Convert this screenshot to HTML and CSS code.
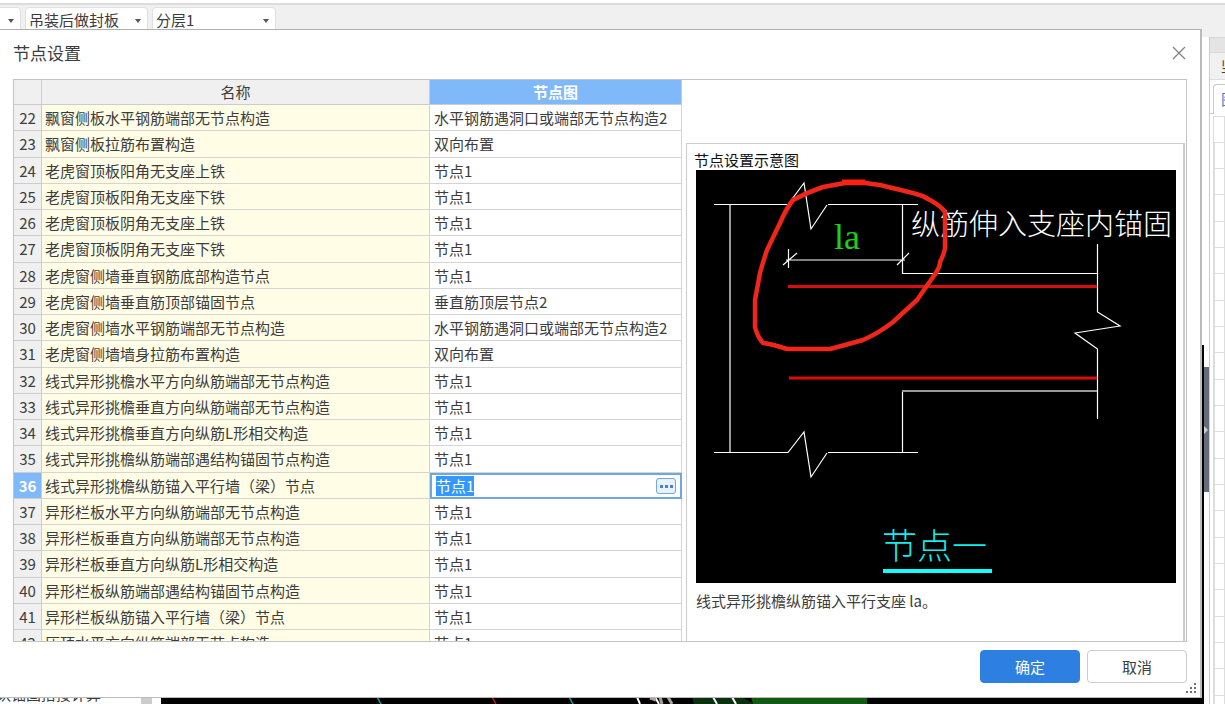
FILE: index.html
```html
<!DOCTYPE html>
<html lang="zh-CN">
<head>
<meta charset="utf-8">
<title>节点设置</title>
<link rel="stylesheet" href="styles.css">
</head>
<body>
<div class="app">
  <div class="toolbar">
    <span class="combo combo-first"><select aria-label="构件"><option></option></select></span>
    <span class="combo combo-type"><select aria-label="封板类型"><option>吊装后做封板</option></select></span>
    <span class="combo combo-layer"><select aria-label="分层"><option>分层1</option></select></span>
  </div>
  <div class="workspace">
    <div class="tree"><div class="tree-label">默认锚固搭接计算</div><div class="tree-scroll"></div></div>
    <div class="canvas">
      <svg class="streaks" width="760" height="7" viewBox="161 697 760 7" aria-hidden="true">
        <path d="M692 697h50l12 7h-60z" fill="#0a3010"/>
        <path d="M751 697h116v7h-114z" fill="#125a14"/>
        <g fill="none" stroke-width="1.5">
          <path d="M377 697l4 7M569 697l4 7" stroke="#159aa0"/>
          <path d="M492 697l4 7" stroke="#c01818"/>
          <path d="M637 697l3 7M655 697l4 7M713 697l4 7M732 697l4 7" stroke="#fff" stroke-width="2"/>
          <path d="M650 698l6 2M660 697l2 7M668 697l4 7" stroke="#b09c9c" stroke-width="3"/>
        </g>
      </svg>
    </div>
    <div class="splitter"><div class="handle"></div></div>
    <div class="side">
      <div class="side-title"></div>
      <div class="side-tools">竖</div>
      <div class="side-tabs"><div class="side-tab">图</div></div>
      <div class="side-head"></div>
      <div class="side-grid"></div>
    </div>
  </div>
</div>

<section class="dialog" role="dialog" aria-labelledby="dlg-title">
  <header class="dialog-head">
    <h1 id="dlg-title">节点设置</h1>
    <button class="close" aria-label="关闭"><svg width="14" height="14" viewBox="0 0 14 14"><path d="M1 1l12 12M13 1L1 13" stroke="#858585" stroke-width="1.4" fill="none"/></svg></button>
  </header>
  <div class="content">
    <div class="table-wrap">
      <table class="nodes">
        <colgroup><col class="c-num"><col><col class="c-node"></colgroup>
        <thead><tr><th></th><th>名称</th><th class="active">节点图</th></tr></thead>
        <tbody>
          <tr><th>22</th><td>飘窗侧板水平钢筋端部无节点构造</td><td>水平钢筋遇洞口或端部无节点构造2</td></tr>
          <tr><th>23</th><td>飘窗侧板拉筋布置构造</td><td>双向布置</td></tr>
          <tr><th>24</th><td>老虎窗顶板阳角无支座上铁</td><td>节点1</td></tr>
          <tr><th>25</th><td>老虎窗顶板阳角无支座下铁</td><td>节点1</td></tr>
          <tr><th>26</th><td>老虎窗顶板阴角无支座上铁</td><td>节点1</td></tr>
          <tr><th>27</th><td>老虎窗顶板阴角无支座下铁</td><td>节点1</td></tr>
          <tr><th>28</th><td>老虎窗侧墙垂直钢筋底部构造节点</td><td>节点1</td></tr>
          <tr><th>29</th><td>老虎窗侧墙垂直筋顶部锚固节点</td><td>垂直筋顶层节点2</td></tr>
          <tr><th>30</th><td>老虎窗侧墙水平钢筋端部无节点构造</td><td>水平钢筋遇洞口或端部无节点构造2</td></tr>
          <tr><th>31</th><td>老虎窗侧墙墙身拉筋布置构造</td><td>双向布置</td></tr>
          <tr><th>32</th><td>线式异形挑檐水平方向纵筋端部无节点构造</td><td>节点1</td></tr>
          <tr><th>33</th><td>线式异形挑檐垂直方向纵筋端部无节点构造</td><td>节点1</td></tr>
          <tr><th>34</th><td>线式异形挑檐垂直方向纵筋L形相交构造</td><td>节点1</td></tr>
          <tr><th>35</th><td>线式异形挑檐纵筋端部遇结构锚固节点构造</td><td>节点1</td></tr>
          <tr class="current"><th>36</th><td>线式异形挑檐纵筋锚入平行墙（梁）节点</td><td class="editing"><div class="editor"><span class="field"><span class="picked">节点1</span></span><button class="more" aria-label="选择节点图"><i></i><i></i><i></i></button></div></td></tr>
          <tr><th>37</th><td>异形栏板水平方向纵筋端部无节点构造</td><td>节点1</td></tr>
          <tr><th>38</th><td>异形栏板垂直方向纵筋端部无节点构造</td><td>节点1</td></tr>
          <tr><th>39</th><td>异形栏板垂直方向纵筋L形相交构造</td><td>节点1</td></tr>
          <tr><th>40</th><td>异形栏板纵筋端部遇结构锚固节点构造</td><td>节点1</td></tr>
          <tr><th>41</th><td>异形栏板纵筋锚入平行墙（梁）节点</td><td>节点1</td></tr>
          <tr><th>42</th><td>压顶水平方向纵筋端部无节点构造</td><td>节点1</td></tr>
        </tbody>
      </table>
    </div>
    <div class="preview-col">
      <div class="preview">
        <h2>节点设置示意图</h2>
        <svg class="drawing" width="480" height="413" viewBox="696 170 480 413" role="img" aria-label="节点一">
          <rect x="696" y="170" width="480" height="413" fill="#000"/>
          <g fill="none" stroke="#fff" stroke-width="1.2">
            <path d="M714 204.500H788L804 183L811 229L827 205M828 204.500H918"/>
            <path d="M714 452.500H788L804 432L811 477L827 453M828 452.500H918"/>
            <path d="M902.500 205V273.500H1097M902.500 452V391"/>
            <path d="M1097.500 244V312L1120 326L1075 333L1097.500 349V419"/>
            <path d="M786 260H905M788.500 249V268M783 265L797 253M897 265L909 253"/>
          </g>
          <path d="M730 205V452M902 391H1097" fill="none" stroke="#999" stroke-width="2"/>
          <path d="M788 286.500H1097M789 378H1097" stroke="#d80f0f" stroke-width="3"/>
          <text class="t-la" x="834" y="249">la</text>
          <text class="t-note" x="911" y="235">纵筋伸入支座内锚固</text>
          <text class="t-name" x="882" y="559">节点一</text>
          <path d="M883 571H992" stroke="#1ff" stroke-width="4"/>
          <path d="M865 183L845 183L823 187Q808 192 793 200Q786 209 780 223L767 250Q763 262 760 273L755 300V327Q757 336 763 343Q772 344 787 349H830L845 345L863 340Q879 333 893 322L917 300L933 277Q940 268 940 262Q945 252 945 247V212Q941 206 930 200Q922 195 913 193L880 185Z" fill="none" stroke="#f0261a" stroke-width="4.500" stroke-linejoin="round"/>
          <path d="M842 182H865" stroke="#ff2010" stroke-width="5"/>
        </svg>
        <p>线式异形挑檐纵筋锚入平行支座 la。</p>
      </div>
    </div>
  </div>
  <footer class="actions">
    <button class="btn primary">确定</button>
    <button class="btn">取消</button>
  </footer>
  <svg class="grip" width="10" height="10" viewBox="0 0 10 10" aria-hidden="true"><path d="M8 0h2v2h-2zM8 4h2v2h-2zM8 8h2v2h-2zM4 4h2v2h-2zM4 8h2v2h-2zM0 8h2v2h-2z" fill="#6d6d78"/></svg>
</section>
</body>
</html>
```
FILE: styles.css
```css
* { box-sizing: border-box; }
body {
  margin: 0;
  height: 100vh;
  overflow: hidden;
  position: relative;
  font: 15px/20px "Noto Sans CJK SC", sans-serif;
  color: #3c3c3c;
  background: #fff;
}
h1, h2, p { margin: 0; font-weight: 400; }
button { font: inherit; color: inherit; padding: 0; }

/* main window behind the dialog */
.app { height: 100%; display: flex; flex-direction: column; }
.toolbar {
  display: flex;
  gap: 4px;
  height: 34px;
  margin-top: 3px;
  padding-top: 2px;
  border-top: 2px solid #dcdcdc;
  background: #f0f0f0;
}
.combo { position: relative; height: 26px; }
.combo-first { width: 21px; }
.combo-type { width: 123px; }
.combo-layer { width: 124px; }
.combo select {
  appearance: none;
  width: 100%;
  height: 100%;
  padding: 0 3px;
  border: 1px solid #e0e0e0;
  border-radius: 4px;
  background: #fff;
  font: inherit;
  color: #3c3c3c;
}
.combo-first select { border-left: 0; border-radius: 0 4px 4px 0; }
.combo::after {
  content: "";
  position: absolute;
  right: 7px;
  top: 12px;
  border: 3px solid transparent;
  border-top: 4px solid #555;
  border-bottom: 0;
}
.workspace { flex: 1; min-height: 0; display: flex; }
.tree { width: 161px; display: flex; align-items: flex-end; overflow: hidden; background: #fff; }
.tree-label { width: 135px; margin-left: -19px; white-space: nowrap; flex: none; }
.tree-scroll { width: 11px; height: 100%; margin-left: 25px; background: #ccc; }
.canvas { flex: 1; min-width: 0; display: flex; align-items: flex-end; overflow: hidden; background: linear-gradient(#fff 308px, #000 308px); }
.streaks { display: block; flex: none; }
.splitter { width: 6px; padding-top: 330px; border-right: 1px solid #ccc; background: #fff; }
.handle { height: 125px; background: #656d7a; display: flex; align-items: center; }
.handle::before { content: ""; border: 4px solid transparent; border-left-color: #ccc; border-right: 0; }
.side { width: 15px; display: flex; flex-direction: column; overflow: hidden; background: #fff; }
.side-title { height: 16px; background: #e4e4e4; border-top: 1px solid #d8d8d8; border-bottom: 1px solid #d8d8d8; }
.side-tools { height: 27px; padding: 3px 0 0 11px; background: #f1f1f1; border-bottom: 1px solid #ddd; }
.side-tabs { height: 34px; padding-top: 4px; border-bottom: 1px solid #ccc; }
.side-tab { width: 40px; height: 30px; margin-left: 3px; padding: 4px 0 0 7px; border: 1px solid #c8c8c8; border-bottom: 0; border-radius: 4px 0 0 0; background: #fff; color: #2e7fe0; }
.side-head { flex: none; height: 27px; margin: 2px 0 0 3px; border: 1px solid #ddd; }
.side-grid {
  flex: 1;
  margin-left: 3px;
  border-left: 2px solid #ddd;
  background: linear-gradient(90deg, #ddd 1px, transparent 1px) 9px 0 / 20px 100% no-repeat,
    repeating-linear-gradient(#fff 0 25px, #ddd 25px 26px, #fff 26px 51px, #ddd 51px 52px, #fff 52px 78px, #ddd 78px 79px);
}

/* dialog */
.dialog {
  position: absolute;
  inset: 29px 23px 6px 0;
  display: flex;
  flex-direction: column;
  padding: 0 13px 14px 13px;
  border: 1px solid #bbb;
  border-width: 1px 2px 1px 0;
  border-top-color: #b0b0b0;
  background: #fff;
}
.dialog-head { display: flex; align-items: center; justify-content: space-between; height: 49px; padding-bottom: 4px; }
.dialog-head h1 { font-size: 17px; line-height: 24px; }
.close { width: 16px; height: 16px; border: 0; background: none; display: grid; place-items: center; }
.content {
  flex: 1;
  min-height: 0;
  display: grid;
  grid-template-columns: minmax(0, 1fr) 504px;
  border: 1px solid #c4c4c4;
  overflow: hidden;
}
.table-wrap { overflow: hidden; }
.nodes { width: 100%; border-collapse: separate; border-spacing: 0; table-layout: fixed; }
.c-num { width: 28px; }
.c-node { width: 252px; }
.nodes tr { height: 26px; }
.nodes tbody tr:nth-child(4n+2) { height: 27px; }
.nodes th, .nodes td {
  padding: 0 4px;
  border-right: 1px solid #d4d4d4;
  border-bottom: 1px solid #d4d4d4;
  text-align: left;
  font-weight: 400;
  white-space: nowrap;
  overflow: hidden;
}
.nodes td:nth-child(2) { padding: 0 3px; background: #fffde6; }
.nodes th { background: #f0f0f0; text-align: center; border-color: #ccc; }
.nodes thead tr { height: 25px; }
.nodes tbody th { padding: 0 2px; }
.nodes .active, .nodes .current th { background: #7fb9fa; color: #fff; font-weight: 700; }
.nodes .editing { padding: 0; border: 0; }
.editor { display: flex; align-items: center; justify-content: space-between; height: 26px; padding: 0 4px; border: 2px solid #6ea7e2; }
.field { display: flex; }
.picked { background: #3399ff; color: #fff; }
.more { display: flex; align-items: center; justify-content: center; gap: 2px; width: 20px; height: 16px; border: 1px solid #6ea7e2; border-radius: 3px; background: #e9f1fc; }
.more i { width: 3px; height: 3px; background: #4a80cc; }
.preview-col { padding: 63px 1px 0 4px; display: flex; }
.preview { flex: 1; padding: 6px 7px; border: 1px solid #ccc; border-right-width: 2px; border-bottom: 0; }
.preview h2 { font-size: 15px; line-height: 20px; color: #111; }
.drawing { display: block; margin-left: 2px; max-width: 100%; }
.preview p { margin: 8px 0 0 2px; }
.t-la { font: 36px "Liberation Serif", serif; fill: #1bd01b; }
.t-note { font: 300 29px "Noto Sans CJK SC", sans-serif; fill: #fff; }
.t-name { font: 300 35px "Noto Sans CJK SC", sans-serif; fill: #1ee; }
.actions { display: flex; justify-content: flex-end; gap: 7px; padding-top: 8px; }
.btn { width: 100px; height: 33px; border: 1px solid #ccc; border-radius: 4px; background: #fff; }
.btn.primary { border-color: #2d80e1; background: #2d80e1; color: #fff; }
.grip { position: absolute; right: 4px; bottom: 4px; }
```
